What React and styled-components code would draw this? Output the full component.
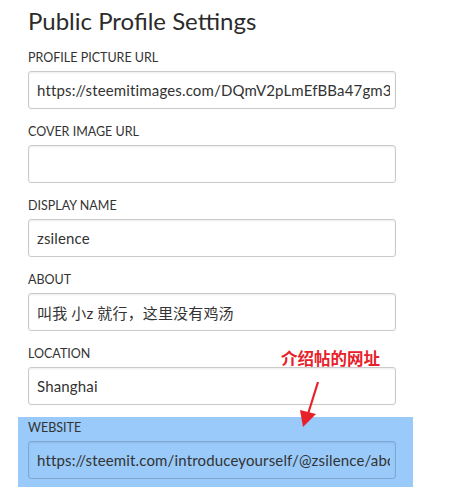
import React from "react";
import styled, { createGlobalStyle } from "styled-components";

const Global = createGlobalStyle`
  html, body { margin: 0; padding: 0; background: #fff; }
  body { font-family: Lato, "Noto Sans", "Noto Sans CJK SC", sans-serif; color: #333; }
`;

const Page = styled.div`
  position: relative;
  width: 460px;
  height: 495px;
  overflow: hidden;
  padding-left: 28px;
  box-sizing: border-box;
`;

const Title = styled.h1`
  margin: 6px 0 12px;
  font-size: 24px;
  line-height: 30px;
  font-weight: 400;
  color: #2b2b2b;
`;

const Field = styled.div`
  width: 368px;
  margin: ${(p) => (p.$highlight ? "-1px 0 0 -10px" : "0 0 13px")};
  padding: ${(p) => (p.$highlight ? "1px 17px 8px 10px" : "0")};
  background: ${(p) => (p.$highlight ? "#99cafa" : "transparent")};
`;

const Label = styled.label`
  display: block;
  padding-top: 1px;
  margin-bottom: 4px;
  font-size: 12.5px;
  line-height: 18px;
  text-transform: uppercase;
  color: #333;
`;

const Input = styled.input`
  display: block;
  box-sizing: border-box;
  width: 368px;
  height: 38px;
  margin: 0;
  padding: 0 5px 0 8px;
  border: 1px solid ${(p) => (p.$highlight ? "#7ea8d0" : "#cacaca")};
  border-radius: 3px;
  background: ${(p) => (p.$highlight ? "transparent" : "#fff")};
  box-shadow: inset 0 1px 2px rgba(0, 0, 0, 0.08);
  font-family: Lato, "Noto Sans CJK SC", sans-serif;
  font-size: 15px;
  letter-spacing: 0.15px;
  color: #333;
  outline: none;
`;

const Note = styled.div`
  position: absolute;
  left: 281px;
  top: 348px;
  font-family: "Noto Sans CJK SC", sans-serif;
  font-weight: 700;
  font-size: 16.5px;
  line-height: 20px;
  color: #e8202a;
  white-space: nowrap;
`;

const Arrow = styled.svg`
  position: absolute;
  left: 295px;
  top: 378px;
`;

const fields = [
  { label: "Profile picture url", value: "https://steemitimages.com/DQmV2pLmEfBBa47gm3ZxNhYwXkT8e" },
  { label: "Cover image url", value: "" },
  { label: "Display Name", value: "zsilence" },
  { label: "About", value: "叫我 小z 就行，这里没有鸡汤" },
  { label: "Location", value: "Shanghai" },
  { label: "Website", value: "https://steemit.com/introduceyourself/@zsilence/about-me", highlight: true },
];

export default function App() {
  return (
    <Page>
      <Global />
      <Title>Public Profile Settings</Title>
      {fields.map((f) => (
        <Field key={f.label} $highlight={f.highlight}>
          <Label>{f.label}</Label>
          <Input $highlight={f.highlight} readOnly value={f.value} />
        </Field>
      ))}
      <Note>介绍帖的网址</Note>
      <Arrow width="30" height="55" viewBox="0 0 30 55">
        <line x1="23" y1="4" x2="13" y2="36" stroke="#e8202a" strokeWidth="2.2" />
        <polygon points="8,49 5,32 21,36" fill="#e8202a" />
      </Arrow>
    </Page>
  );
}
